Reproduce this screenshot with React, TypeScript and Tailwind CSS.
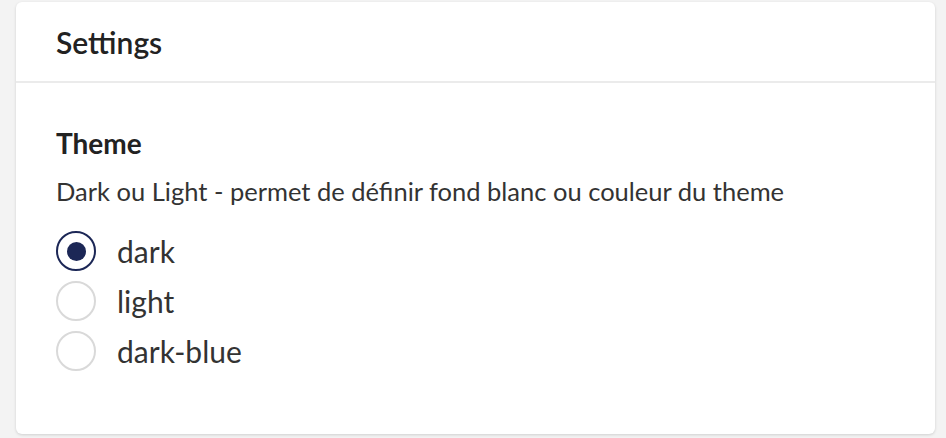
import { useState } from 'react'

const options = ['dark', 'light', 'dark-blue']

export default function App() {
    const [theme, setTheme] = useState('dark')

    return (
        <div className="min-h-[438px] w-[946px] bg-[#f3f3f3] px-4 pt-[2px] font-['Lato','Noto_Sans',sans-serif]">
            <div className="w-[919px] rounded-md bg-white shadow-[0_1px_3px_rgba(0,0,0,0.15)]">
                <div className="flex h-[81px] items-center border-b-2 border-[#ebebeb] px-10">
                    <h2 className="text-[30px] font-semibold leading-[36px] text-[#222]">Settings</h2>
                </div>
                <div className="px-10 pt-[43px] pb-[63px]">
                    <h3 className="text-[28px] font-bold leading-[34px] text-[#222]">Theme</h3>
                    <p className="mt-[16px] text-[25.5px] leading-[30px] text-[#333]">
                        Dark ou Light - permet de définir fond blanc ou couleur du theme
                    </p>
                    <div className="mt-[25px] flex flex-col gap-[10px]">
                        {options.map((opt) => {
                            const checked = theme === opt
                            return (
                                <label key={opt} className="flex h-[40px] cursor-pointer items-center gap-[21px]">
                                    <span
                                        onClick={() => setTheme(opt)}
                                        className={
                                            checked
                                                ? 'flex h-[40px] w-[40px] items-center justify-center rounded-full border-2 border-[#1c2756]'
                                                : 'flex h-[40px] w-[40px] items-center justify-center rounded-full border-2 border-[#d9d9d9]'
                                        }
                                    >
                                        {checked && <span className="h-[19px] w-[19px] rounded-full bg-[#1c2756]" />}
                                    </span>
                                    <span className="text-[30px] leading-[36px] text-[#333]">{opt}</span>
                                </label>
                            )
                        })}
                    </div>
                </div>
            </div>
        </div>
    )
}
